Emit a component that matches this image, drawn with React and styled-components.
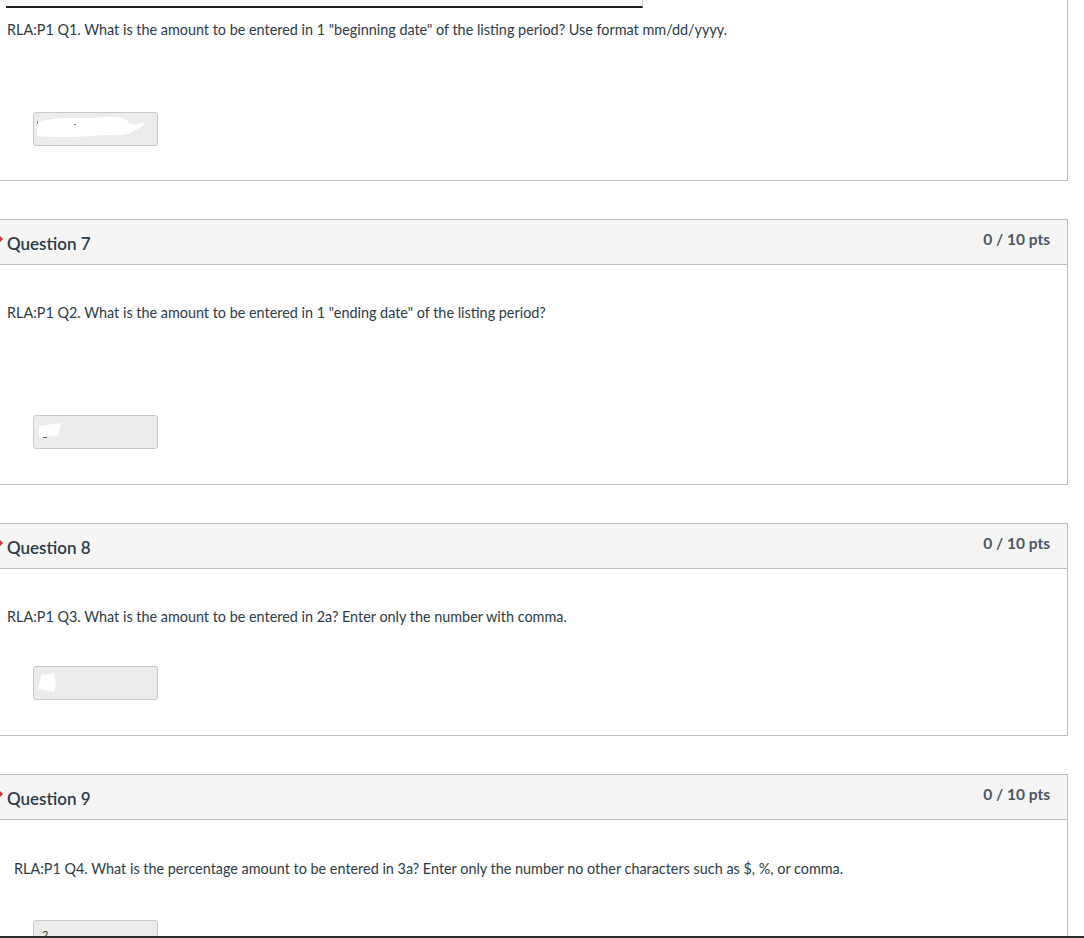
import React from "react";
import styled, { createGlobalStyle } from "styled-components";

const Global = createGlobalStyle`
  html, body { margin: 0; padding: 0; background: #fff; }
  body { font-family: Lato, "Open Sans", "Liberation Sans", sans-serif; color: #2d3b45; }
`;

const Page = styled.div`
  width: 1084px;
  height: 938px;
  box-sizing: border-box;
  overflow: hidden;
  border-bottom: 2px solid #2b2b2b;
  position: relative;
`;

const Panel = styled.section`
  width: 1068px;
  box-sizing: border-box;
  border-right: 1px solid #b9bec2;
  border-bottom: 1px solid #b9bec2;
  border-top: ${(p) => (p.$cut ? "none" : "1px solid #b9bec2")};
  margin-top: ${(p) => (p.$cut ? "0" : "38px")};
  background: #fff;
`;

const Header = styled.header`
  height: 44px;
  background: #f5f5f5;
  border-bottom: 1px solid #b9bec2;
  display: flex;
  justify-content: space-between;
  align-items: flex-start;
  padding: 0 17px 0 7px;
  position: relative;
`;

const Flag = styled.span`
  position: absolute;
  left: 0;
  top: 16px;
  width: 0;
  height: 0;
  border-top: 3px solid transparent;
  border-bottom: 3px solid transparent;
  border-left: 3px solid #d0342c;
`;

const Name = styled.h2`
  margin: 14px 0 0;
  font-size: 17px;
  line-height: 20px;
  font-weight: 600;
  color: #2d3b45;
`;

const Points = styled.div`
  margin-top: 9px;
  font-size: 15.5px;
  line-height: 20px;
  font-weight: 700;
  color: #4c575e;
`;

const Body = styled.div`
  padding: ${(p) => p.$top}px 0 ${(p) => p.$bottom}px;
  display: flex;
  flex-direction: column;
`;

const TopStrip = styled.div`
  width: 636px;
  height: 6px;
  margin-left: 6px;
  border-bottom: 2px solid #1e1e1e;
  border-right: 1px solid #c8c8c8;
`;

const Text = styled.p`
  margin: 0;
  padding-left: ${(p) => p.$indent}px;
  font-size: 14.4px;
  line-height: 20px;
  color: #2d3b45;
`;

const Answer = styled.div`
  margin: ${(p) => p.$gap}px 0 0 33px;
  width: 125px;
  height: 34px;
  box-sizing: border-box;
  background: #ececec;
  border: 1px solid #c4c8cb;
  border-radius: 3px;
  position: relative;
  overflow: hidden;
  font-size: 13px;
  color: #333;
`;

const Redact = styled.svg`
  position: absolute;
  left: 0;
  top: 0;
`;

const Peek = styled.span`
  position: absolute;
  left: 8px;
  top: 7px;
  font-size: 11px;
`;

const blobs = {
  a: (
    <Redact width="125" height="34" viewBox="0 0 125 34">
      <path d="M3 9 C15 5 40 4 62 5 C75 4 85 3 92 7 C97 11 100 13 104 11 C110 8 116 10 100 18 C95 22 85 23 70 22 C50 24 25 25 3 23 Z" fill="#fff" />
      <rect x="40" y="11" width="2" height="1" fill="#888" />
      <rect x="3" y="8" width="1" height="3" fill="#888" />
    </Redact>
  ),
  b: (
    <Redact width="125" height="34" viewBox="0 0 125 34">
      <path d="M5 10 L27 7 L24 20 L5 21 Z" fill="#fff" />
      <rect x="9" y="21" width="4" height="1" fill="#555" />
    </Redact>
  ),
  c: (
    <Redact width="125" height="34" viewBox="0 0 125 34">
      <path d="M7 8 L20 6 L22 18 L20 25 L4 22 L6 15 Z" fill="#fff" />
    </Redact>
  ),
};

export default function App() {
  return (
    <>
      <Global />
      <Page>
        <Panel $cut>
          <TopStrip />
          <Body $top={12} $bottom={34}>
            <Text $indent={7}>
              RLA:P1 Q1. What is the amount to be entered in 1 "beginning date" of the listing period? Use format mm/dd/yyyy.
            </Text>
            <Answer $gap={72}>{blobs.a}</Answer>
          </Body>
        </Panel>

        <Panel>
          <Header>
            <Flag />
            <Name>Question 7</Name>
            <Points>0 / 10 pts</Points>
          </Header>
          <Body $top={38} $bottom={35}>
            <Text $indent={7}>
              RLA:P1 Q2. What is the amount to be entered in 1 "ending date" of the listing period?
            </Text>
            <Answer $gap={92}>{blobs.b}</Answer>
          </Body>
        </Panel>

        <Panel>
          <Header>
            <Flag />
            <Name>Question 8</Name>
            <Points>0 / 10 pts</Points>
          </Header>
          <Body $top={38} $bottom={35}>
            <Text $indent={7}>
              RLA:P1 Q3. What is the amount to be entered in 2a? Enter only the number with comma.
            </Text>
            <Answer $gap={39}>{blobs.c}</Answer>
          </Body>
        </Panel>

        <Panel>
          <Header>
            <Flag />
            <Name>Question 9</Name>
            <Points>0 / 10 pts</Points>
          </Header>
          <Body $top={39} $bottom={35}>
            <Text $indent={14}>
              RLA:P1 Q4. What is the percentage amount to be entered in 3a? Enter only the number no other characters such as $, %, or comma.
            </Text>
            <Answer $gap={41}>
              <Peek>2</Peek>
            </Answer>
          </Body>
        </Panel>
      </Page>
    </>
  );
}
